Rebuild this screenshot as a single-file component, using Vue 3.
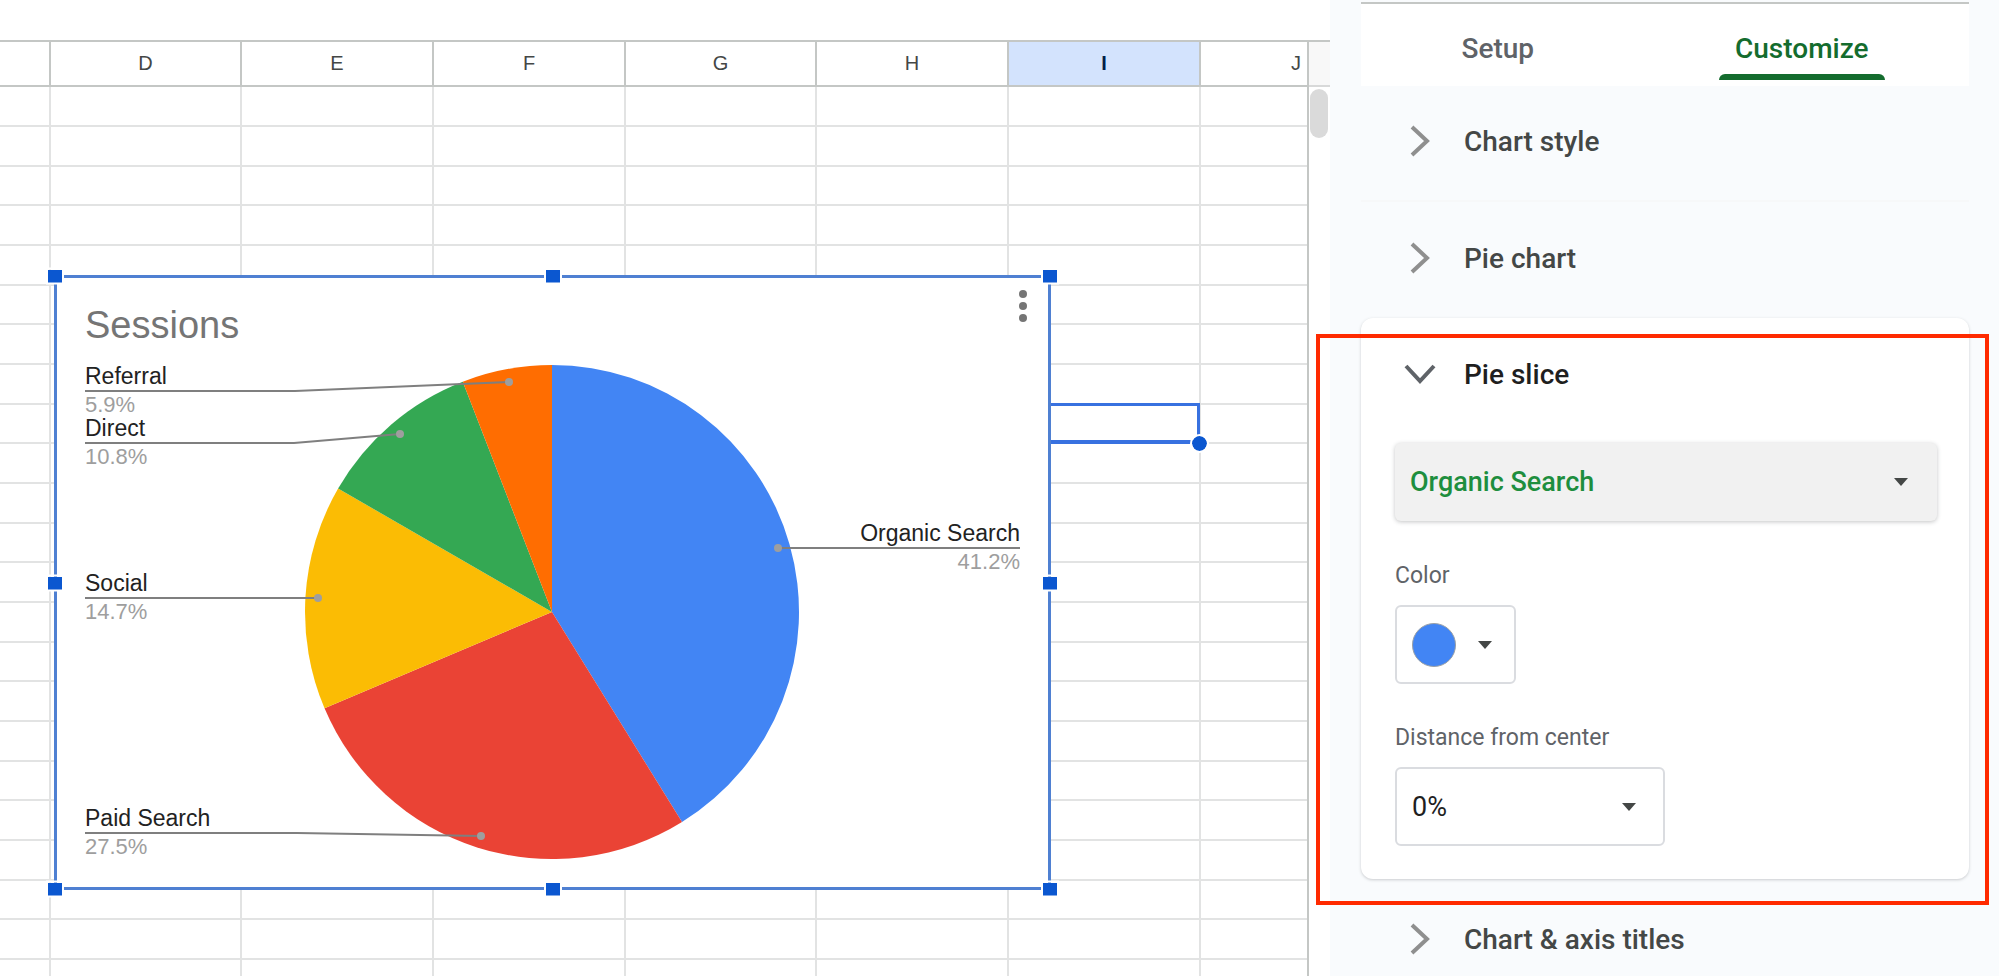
<script setup>
import { computed, ref } from 'vue'

const columns = ['C', 'D', 'E', 'F', 'G', 'H', 'I', 'J']
const rowCount = 24
const activeCell = { column: 'I', row: 9 }

const tabs = ['Setup', 'Customize']
const activeTab = ref('Customize')
const selectedSlice = ref('Organic Search')
const distance = ref('0%')
const distances = ['0%', '10%', '25%', '50%']

const center = { x: 495, y: 334 }
const radius = 247

// leader is the callout line, dot is where it ends on the slice
const channels = [
    { name: 'Organic Search', sessions: 42, color: '#4285f4', x: 963, y: 270, leader: '963,270 721,270', dot: [721, 270] },
    { name: 'Paid Search', sessions: 28, color: '#ea4335', x: 28, y: 555, leader: '28,555 240,555 424,558', dot: [424, 558] },
    { name: 'Social', sessions: 15, color: '#fbbc04', x: 28, y: 320, leader: '28,320 261,320', dot: [261, 320] },
    { name: 'Direct', sessions: 11, color: '#34a853', x: 28, y: 165, leader: '28,165 237,165 343,156', dot: [343, 156] },
    { name: 'Referral', sessions: 6, color: '#ff6d01', x: 28, y: 113, leader: '28,113 238,113 452,104', dot: [452, 104] },
]

const pointAt = (share) => {
    const angle = share * 2 * Math.PI
    return `${center.x + radius * Math.sin(angle)} ${center.y - radius * Math.cos(angle)}`
}

const slices = computed(() => {
    const total = channels.reduce((sum, c) => sum + c.sessions, 0)
    let start = 0
    return channels.map((c) => {
        const share = c.sessions / total
        const path = `M${center.x} ${center.y}L${pointAt(start)}A${radius} ${radius} 0 ${share > 0.5 ? 1 : 0} 1 ${pointAt(start + share)}Z`
        start += share
        return { ...c, path, percent: (share * 100).toFixed(1) + '%', anchor: c.x > center.x ? 'end' : 'start' }
    })
})

const handles = ['nw', 'n', 'ne', 'w', 'e', 'sw', 's', 'se']
const isActive = (column, row) => column === activeCell.column && row === activeCell.row
</script>

<template>
    <div class="app">
        <main class="sheet">
            <div class="toolbar-gap"></div>
            <div class="sheet-body">
                <div class="cells">
                    <table>
                        <thead>
                            <tr>
                                <th v-for="column in columns" :key="column" :class="{ selected: column === activeCell.column }">
                                    {{ column === 'C' ? '' : column }}
                                </th>
                            </tr>
                        </thead>
                        <tbody>
                            <tr v-for="row in rowCount" :key="row">
                                <td v-for="column in columns" :key="column">
                                    <div v-if="isActive(column, row)" class="active-cell"></div>
                                </td>
                            </tr>
                        </tbody>
                    </table>
                </div>
                <div class="scrollbar">
                    <div class="scroll-head"></div>
                    <div class="scroll-thumb"></div>
                </div>
            </div>

            <section class="chart">
                <svg class="chart-canvas" viewBox="0 0 991 609">
                    <text class="chart-title" x="28" y="60">Sessions</text>
                    <path v-for="slice in slices" :key="slice.name" :d="slice.path" :fill="slice.color" />
                    <g v-for="slice in slices" :key="slice.name">
                        <polyline class="leader" :points="slice.leader" />
                        <circle class="leader-dot" :cx="slice.dot[0]" :cy="slice.dot[1]" r="4" />
                        <text class="slice-name" :x="slice.x" :y="slice.y - 7" :text-anchor="slice.anchor">{{ slice.name }}</text>
                        <text class="slice-percent" :x="slice.x" :y="slice.y + 21" :text-anchor="slice.anchor">{{ slice.percent }}</text>
                    </g>
                </svg>
                <button class="chart-menu" type="button" aria-label="Chart options">
                    <svg width="8" height="32" viewBox="0 0 8 32" fill="#757575">
                        <circle cx="4" cy="4" r="4" />
                        <circle cx="4" cy="16" r="4" />
                        <circle cx="4" cy="28" r="4" />
                    </svg>
                </button>
                <span v-for="handle in handles" :key="handle" class="handle" :class="handle"></span>
            </section>
        </main>

        <aside class="panel">
            <nav class="tabs">
                <button v-for="tab in tabs" :key="tab" type="button" class="tab" :class="{ active: tab === activeTab }" @click="activeTab = tab">
                    <span>{{ tab }}</span>
                </button>
            </nav>

            <button type="button" class="section-title divided">
                <svg class="chevron" viewBox="0 0 32 32"><path d="M8 2L23 16L8 30" /></svg>
                Chart style
            </button>
            <button type="button" class="section-title">
                <svg class="chevron" viewBox="0 0 32 32"><path d="M8 2L23 16L8 30" /></svg>
                Pie chart
            </button>

            <section class="card">
                <button type="button" class="section-title open">
                    <svg class="chevron" viewBox="0 0 32 32"><path d="M2 8L16 23L30 8" /></svg>
                    Pie slice
                </button>
                <form class="fields" @submit.prevent>
                    <div class="select slice-select">
                        <select v-model="selectedSlice" aria-label="Slice">
                            <option v-for="channel in channels" :key="channel.name">{{ channel.name }}</option>
                        </select>
                        <svg class="arrow" viewBox="0 0 14 8"><path d="M0 0H14L7 8Z" /></svg>
                    </div>

                    <label for="slice-color">Color</label>
                    <button id="slice-color" type="button" class="color-button">
                        <span class="swatch"></span>
                        <svg class="arrow" viewBox="0 0 14 8"><path d="M0 0H14L7 8Z" /></svg>
                    </button>

                    <label for="slice-distance">Distance from center</label>
                    <div class="select distance-select">
                        <select id="slice-distance" v-model="distance">
                            <option v-for="option in distances" :key="option">{{ option }}</option>
                        </select>
                        <svg class="arrow" viewBox="0 0 14 8"><path d="M0 0H14L7 8Z" /></svg>
                    </div>
                </form>
                <div class="highlight"></div>
            </section>

            <button type="button" class="section-title">
                <svg class="chevron" viewBox="0 0 32 32"><path d="M8 2L23 16L8 30" /></svg>
                Chart &amp; axis titles
            </button>
        </aside>
    </div>
</template>

<style>
body {
    margin: 0;
    overflow: hidden;
}
</style>

<style scoped>
.app {
    display: flex;
    height: 100vh;
    font-family: Roboto, "Liberation Sans", sans-serif;
    background: #fff;
}

button, select {
    margin: 0;
    padding: 0;
    border: none;
    background: none;
    font-family: inherit;
    cursor: pointer;
}

/* spreadsheet */
.sheet {
    position: relative;
    z-index: 0;
    flex: 1;
    min-width: 0;
    display: flex;
    flex-direction: column;
}

.toolbar-gap {
    flex: none;
    height: 40px;
}

.sheet-body {
    flex: 1;
    min-height: 0;
    display: flex;
}

.cells {
    flex: 1;
    min-width: 0;
    overflow: hidden;
    border-right: 2px solid #c4c7c5;
}

table {
    table-layout: fixed;
    width: 1393px;
    border-spacing: 0;
}

th, td {
    box-sizing: border-box;
    padding: 0;
    border-right: 2px solid #e2e3e3;
    border-bottom: 2px solid #e2e3e3;
}

th {
    width: 192px;
    height: 47px;
    border-top: 2px solid #c4c7c5;
    border-color: #c4c7c5;
    font-family: "Liberation Sans", Arial, sans-serif;
    font-size: 20px;
    font-weight: 400;
    color: #444746;
}

th:first-child {
    width: 51px;
}

th:nth-child(2), th:nth-child(5) {
    width: 191px;
}

th.selected {
    background: #d3e3fd;
    color: #041e49;
    font-weight: 700;
}

td {
    position: relative;
    height: 40px;
}

tr:nth-child(3n) td {
    height: 39px;
}

.active-cell {
    position: absolute;
    z-index: 1;
    inset: -2px -1px -2px 0;
    border: 3px solid #3871e0;
    border-bottom-width: 4px;
}

.active-cell::after {
    content: "";
    position: absolute;
    right: -12px;
    bottom: -13px;
    width: 15px;
    height: 15px;
    border: 2px solid #fff;
    border-radius: 50%;
    background: #0b57d0;
    background-clip: padding-box;
}

.scrollbar {
    flex: none;
    width: 21px;
}

.scroll-head {
    box-sizing: border-box;
    height: 47px;
    border-top: 2px solid #c4c7c5;
    border-bottom: 2px solid #d8d9d9;
    background: #f8f8f8;
}

.scroll-thumb {
    height: 49px;
    margin: 2px 2px 0 1px;
    border-radius: 9px;
    background: #dadada;
}

/* chart floating over the cells */
.chart {
    position: absolute;
    z-index: 2;
    left: 54px;
    top: 275px;
    width: 991px;
    height: 609px;
    border: 3px solid #4f80d2;
    background: #fff;
}

.chart-canvas {
    display: block;
    width: 100%;
    height: 100%;
    font-family: "Liberation Sans", Arial, sans-serif;
}

.chart-title {
    font-size: 38px;
    fill: #757575;
}

.slice-name {
    font-size: 23px;
    fill: #222;
}

.slice-percent {
    font-size: 22px;
    fill: #9e9e9e;
}

.leader {
    fill: none;
    stroke: #7f7f7f;
    stroke-width: 2;
}

.leader-dot {
    fill: #9e9e9e;
}

.chart-menu {
    position: absolute;
    top: 10px;
    right: 13px;
    width: 24px;
    height: 36px;
    display: flex;
    align-items: center;
    justify-content: center;
}

.handle {
    position: absolute;
    width: 14px;
    height: 13px;
    border: 2px solid #fff;
    background: #0b57d0;
    background-clip: padding-box;
    transform: translate(-50%, -50%);
}

.nw, .n, .ne { top: -2px; }
.w, .e { top: 50%; }
.sw, .s, .se { top: calc(100% + 2px); }
.nw, .w, .sw { left: -2px; }
.n, .s { left: 50%; }
.ne, .e, .se { left: calc(100% + 2px); }

/* side panel */
.panel {
    position: relative;
    box-sizing: border-box;
    flex: none;
    width: 669px;
    padding: 2px 30px 0 31px;
    background: #f9fbfd;
}

.tabs {
    box-sizing: border-box;
    display: grid;
    grid-template-columns: 9fr 11fr;
    height: 84px;
    border-top: 2px solid #c4c7c5;
    background: #fff;
}

.tab {
    display: flex;
    justify-content: center;
    font-size: 28px;
    font-weight: 500;
    color: #5f6368;
}

.tab span {
    box-sizing: border-box;
    height: 76px;
    padding: 0 16px;
    line-height: 90px;
}

.tab.active {
    color: #146c2e;
}

.tab.active span {
    position: relative;
}

.tab.active span::after {
    content: "";
    position: absolute;
    left: 0;
    right: 0;
    bottom: 0;
    height: 6px;
    border-radius: 6px 6px 0 0;
    background: #146c2e;
}

.section-title {
    box-sizing: border-box;
    display: flex;
    align-items: center;
    gap: 28px;
    width: 100%;
    height: 116px;
    padding: 0 43px 4px;
    font-size: 28px;
    font-weight: 500;
    color: #444746;
    text-align: left;
}

.section-title.divided {
    border-bottom: 2px solid #f7f8f9;
}

.section-title.open {
    color: #1f1f1f;
}

.chevron {
    width: 32px;
    height: 32px;
    fill: none;
    stroke: #8f8f8f;
    stroke-width: 4;
}

.open .chevron {
    stroke: #5f6368;
}

.card {
    position: relative;
    margin-bottom: 4px;
    padding-bottom: 33px;
    border-radius: 12px;
    background: #fff;
    box-shadow: 0 1px 3px rgba(60, 64, 67, .25);
}

.fields {
    display: flex;
    flex-direction: column;
    align-items: flex-start;
    padding: 9px 32px 0 34px;
}

.fields label {
    font-size: 23px;
    line-height: 28px;
    color: #5f6368;
}

.select {
    display: grid;
    align-items: center;
}

.select select, .select .arrow {
    grid-area: 1 / 1;
}

.select select {
    appearance: none;
    box-sizing: border-box;
    width: 100%;
    height: 78px;
    padding: 0 15px;
    border-radius: 6px;
    font-size: 27px;
    color: #1f1f1f;
}

.arrow {
    width: 14px;
    height: 8px;
    fill: #444746;
    pointer-events: none;
}

.select .arrow {
    justify-self: end;
    margin-right: 29px;
}

.slice-select {
    width: 100%;
    margin-bottom: 41px;
}

.slice-select select {
    background: #f1f1f1;
    box-shadow: 0 1px 4px rgba(60, 64, 67, .3);
    color: #1e8e3e;
    font-weight: 500;
}

.color-button {
    box-sizing: border-box;
    display: flex;
    align-items: center;
    gap: 22px;
    width: 121px;
    height: 79px;
    margin: 15px 0 40px;
    padding: 0 15px;
    border: 2px solid #dadce0;
    border-radius: 6px;
}

.swatch {
    box-sizing: border-box;
    width: 44px;
    height: 44px;
    border: 1px solid #9aa0a6;
    border-radius: 50%;
    background: #4285f4;
}

.distance-select {
    width: 270px;
    margin-top: 15px;
}

.distance-select select {
    height: 79px;
    border: 2px solid #dadce0;
}

.highlight {
    position: absolute;
    inset: 16px -20px -26px -45px;
    border: 4px solid #ff2a00;
    pointer-events: none;
}
</style>
